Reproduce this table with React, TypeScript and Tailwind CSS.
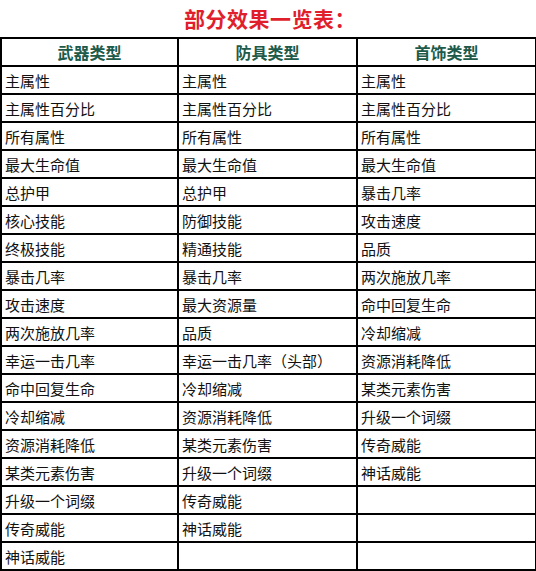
const weapons = [
  '主属性', '主属性百分比', '所有属性', '最大生命值', '总护甲', '核心技能', '终极技能', '暴击几率', '攻击速度',
  '两次施放几率', '幸运一击几率', '命中回复生命', '冷却缩减', '资源消耗降低', '某类元素伤害', '升级一个词缀', '传奇威能', '神话威能',
];
const armor = [
  '主属性', '主属性百分比', '所有属性', '最大生命值', '总护甲', '防御技能', '精通技能', '暴击几率', '最大资源量',
  '品质', '幸运一击几率（头部）', '冷却缩减', '资源消耗降低', '某类元素伤害', '升级一个词缀', '传奇威能', '神话威能',
];
const jewelry = [
  '主属性', '主属性百分比', '所有属性', '最大生命值', '暴击几率', '攻击速度', '品质', '两次施放几率', '命中回复生命',
  '冷却缩减', '资源消耗降低', '某类元素伤害', '升级一个词缀', '传奇威能', '神话威能',
];

const cjk = '"Noto Sans CJK SC", "Noto Sans", sans-serif';

export default function App() {
  const rows = Array.from({ length: 18 }, (_, i) => [weapons[i] ?? '', armor[i] ?? '', jewelry[i] ?? '']);

  return (
    <div className="w-[536px] h-[571px] bg-white overflow-hidden" style={{ fontFamily: cjk }}>
      <div className="h-[37px] flex items-center justify-center pl-[4px]">
        <h1 className="text-[21px] font-bold text-[#e01e2c] leading-none tracking-[0.5px]">部分效果一览表：</h1>
      </div>
      <table className="w-[535px] border-collapse table-fixed">
        <colgroup>
          <col className="w-[177px]" />
          <col className="w-[179px]" />
          <col className="w-[179px]" />
        </colgroup>
        <thead>
          <tr className="h-[28px]">
            {['武器类型', '防具类型', '首饰类型'].map((h) => (
              <th key={h} className="border-2 border-black p-0 text-center text-[16px] font-bold text-[#1d5a49] leading-none">
                {h}
              </th>
            ))}
          </tr>
        </thead>
        <tbody>
          {rows.map((r, i) => (
            <tr key={i} className="h-[28px]">
              {r.map((c, j) => (
                <td key={j} className="border-2 border-black p-0 pl-[3px] text-[15px] text-[#111] leading-none whitespace-nowrap">
                  {c}
                </td>
              ))}
            </tr>
          ))}
        </tbody>
      </table>
    </div>
  );
}
